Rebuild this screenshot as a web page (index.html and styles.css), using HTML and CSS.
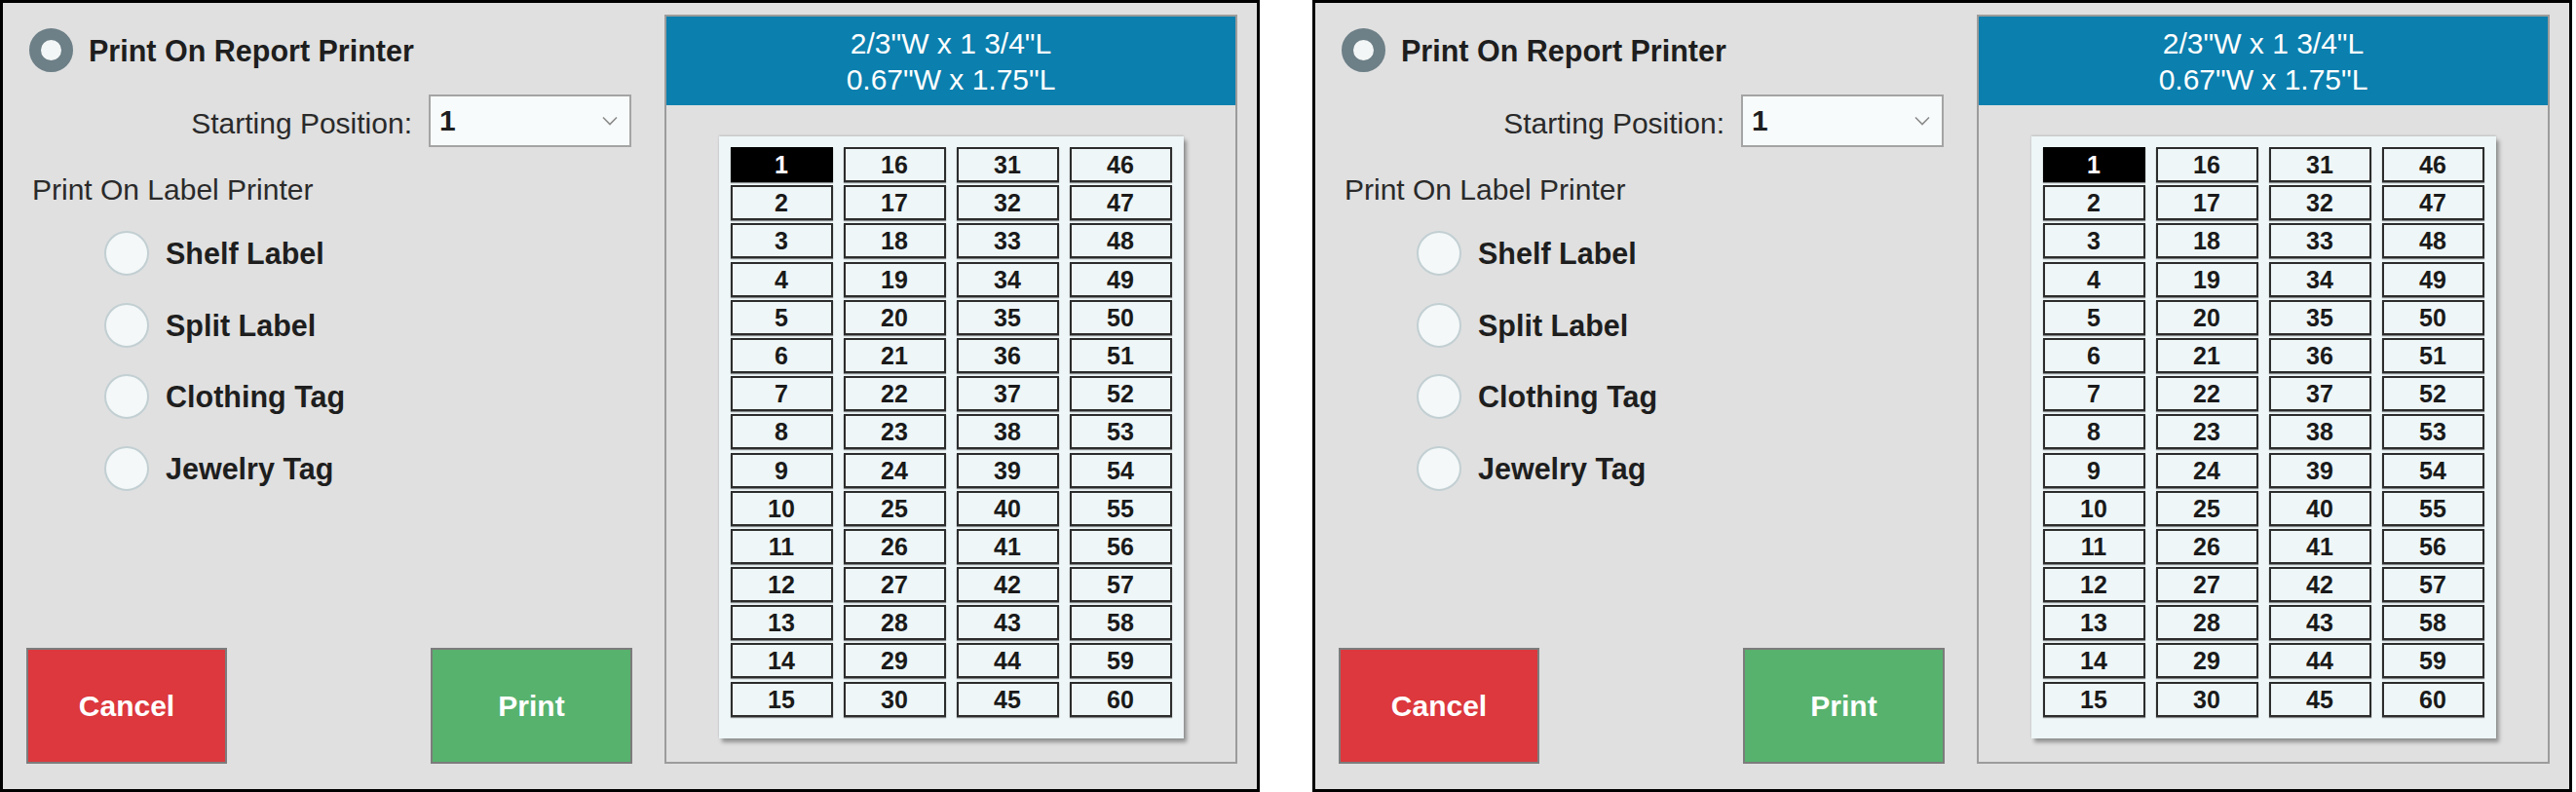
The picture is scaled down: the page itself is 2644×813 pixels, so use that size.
FILE: index.html
```html
<!DOCTYPE html>
<html lang="en">
<head>
    <meta charset="UTF-8">
    <title>Label Printing</title>
    <link rel="stylesheet" href="styles.css">
</head>
<body>
    <div class="screens">
        <div class="panel">
            <div class="form">
                <div class="report-row">
                    <span class="radio checked"></span>
                    <span class="bold-label">Print On Report Printer</span>
                </div>
                <div class="start-row">
                    <span class="start-label">Starting Position:</span>
                    <div class="select">
                        <span>1</span>
                        <svg width="16" height="10" viewBox="0 0 16 10"><polyline points="1,1.5 8,8.5 15,1.5" fill="none" stroke="#8a8a8a" stroke-width="1.6"/></svg>
                    </div>
                </div>
                <div class="section-label">Print On Label Printer</div>
                <div class="radio-list">
                    <div class="radio-row"><span class="radio"></span><span class="bold-label">Shelf Label</span></div>
                    <div class="radio-row"><span class="radio"></span><span class="bold-label">Split Label</span></div>
                    <div class="radio-row"><span class="radio"></span><span class="bold-label">Clothing Tag</span></div>
                    <div class="radio-row"><span class="radio"></span><span class="bold-label">Jewelry Tag</span></div>
                </div>
                <div class="actions">
                    <button class="cancel">Cancel</button>
                    <button class="print">Print</button>
                </div>
            </div>
            <div class="preview">
                <div class="preview-head">
                    <div>2/3&quot;W x 1 3/4&quot;L</div>
                    <div>0.67&quot;W x 1.75&quot;L</div>
                </div>
                <div class="sheet"><div class="cells"></div></div>
            </div>
        </div>

        <div class="panel">
            <div class="form">
                <div class="report-row">
                    <span class="radio checked"></span>
                    <span class="bold-label">Print On Report Printer</span>
                </div>
                <div class="start-row">
                    <span class="start-label">Starting Position:</span>
                    <div class="select">
                        <span>1</span>
                        <svg width="16" height="10" viewBox="0 0 16 10"><polyline points="1,1.5 8,8.5 15,1.5" fill="none" stroke="#8a8a8a" stroke-width="1.6"/></svg>
                    </div>
                </div>
                <div class="section-label">Print On Label Printer</div>
                <div class="radio-list">
                    <div class="radio-row"><span class="radio"></span><span class="bold-label">Shelf Label</span></div>
                    <div class="radio-row"><span class="radio"></span><span class="bold-label">Split Label</span></div>
                    <div class="radio-row"><span class="radio"></span><span class="bold-label">Clothing Tag</span></div>
                    <div class="radio-row"><span class="radio"></span><span class="bold-label">Jewelry Tag</span></div>
                </div>
                <div class="actions">
                    <button class="cancel">Cancel</button>
                    <button class="print">Print</button>
                </div>
            </div>
            <div class="preview">
                <div class="preview-head">
                    <div>2/3&quot;W x 1 3/4&quot;L</div>
                    <div>0.67&quot;W x 1.75&quot;L</div>
                </div>
                <div class="sheet"><div class="cells"></div></div>
            </div>
        </div>
    </div>
    <script>
        // fill each sheet with label positions 1..60, column by column
        document.querySelectorAll('.cells').forEach(grid => {
            for (let i = 1; i <= 60; i++) {
                const cell = document.createElement('div');
                cell.className = i === 1 ? 'cell selected' : 'cell';
                cell.textContent = i;
                grid.appendChild(cell);
            }
        });
    </script>
</body>
</html>
```

FILE: styles.css
```css
body {
    margin: 0;
    background: #fff;
    font-family: "Liberation Sans", Arial, sans-serif;
    color: #1e1e1e;
}
.screens {
    display: flex;
    gap: 54px;
}
.panel {
    box-sizing: border-box;
    width: 1293px;
    height: 813px;
    border: 3px solid #000;
    background: #e0e0e0;
    padding: 12px 20px 26px 24px;
    display: flex;
    gap: 33px;
}
.form {
    width: 622px;
    display: flex;
    flex-direction: column;
}
.report-row {
    margin-top: 14px;
    padding-left: 3px;
    display: flex;
    align-items: center;
    gap: 16px;
    height: 45px;
}
.radio {
    box-sizing: border-box;
    width: 46px;
    height: 46px;
    border-radius: 50%;
    border: 2px solid #c2cfd3;
    background: #f4f8f8;
    flex: none;
}
.radio.checked {
    width: 45px;
    height: 45px;
    border: 12px solid #6d7f87;
    background: #f3f6f6;
}
.bold-label {
    font-weight: bold;
    font-size: 30.5px;
    line-height: 34px;
}
.start-row {
    margin-top: 23px;
    padding-right: 1px;
    display: flex;
    justify-content: flex-end;
    align-items: center;
    gap: 17px;
}
.start-label {
    font-size: 30px;
    line-height: 34px;
    color: #2a2a2a;
    margin-top: 6px;
}
.select {
    box-sizing: border-box;
    width: 208px;
    height: 54px;
    border: 2px solid #a4a4a4;
    background: #f8fbfb;
    display: flex;
    align-items: center;
    justify-content: space-between;
    padding: 0 12px 0 9px;
    font-weight: bold;
    font-size: 30px;
}
.section-label {
    margin-top: 27px;
    margin-left: 6px;
    font-size: 30px;
    line-height: 34px;
    color: #2a2a2a;
}
.radio-list {
    margin-top: 25px;
    padding-left: 80px;
    display: flex;
    flex-direction: column;
    gap: 27.5px;
}
.radio-row {
    display: flex;
    align-items: center;
    gap: 17px;
    height: 46px;
}
.actions {
    margin-top: auto;
    display: flex;
    justify-content: space-between;
}
.actions button {
    width: 206px;
    height: 119px;
    border: 2px solid #7c7c7c;
    color: #fff;
    font-family: "Liberation Sans", Arial, sans-serif;
    font-weight: bold;
    font-size: 30px;
    cursor: pointer;
}
button.cancel {
    background: #dc383d;
}
button.print {
    width: 207px;
    background: #57b26e;
}
.preview {
    box-sizing: border-box;
    width: 588px;
    height: 769px;
    border: 2px solid #9c9c9c;
    background: #e0e0e0;
}
.preview-head {
    height: 91px;
    background: #0b7fae;
    color: #fff;
    font-size: 30px;
    line-height: 37px;
    text-align: center;
    display: flex;
    flex-direction: column;
    justify-content: center;
}
.sheet {
    box-sizing: border-box;
    width: 477px;
    height: 618px;
    margin: 32px auto 0;
    padding: 11px 0 0 12px;
    background: #eef6f7;
    box-shadow: 3px 4px 4px rgba(0, 0, 0, 0.35), 0 -1px 2px rgba(0, 0, 0, 0.15);
}
.cells {
    display: grid;
    grid-auto-flow: column;
    grid-template-columns: repeat(4, 105px);
    grid-template-rows: repeat(15, 36px);
    column-gap: 11px;
    row-gap: 3.2px;
}
.cell {
    box-sizing: border-box;
    border: 2px solid #2c2c2c;
    box-shadow: 0 1px 1px rgba(0, 0, 0, 0.45);
    background: #eef6f7;
    text-align: center;
    font-weight: bold;
    font-size: 25px;
    line-height: 32px;
    color: #1a1a1a;
}
.cell.selected {
    background: #000;
    border-color: #000;
    color: #fff;
}
```
